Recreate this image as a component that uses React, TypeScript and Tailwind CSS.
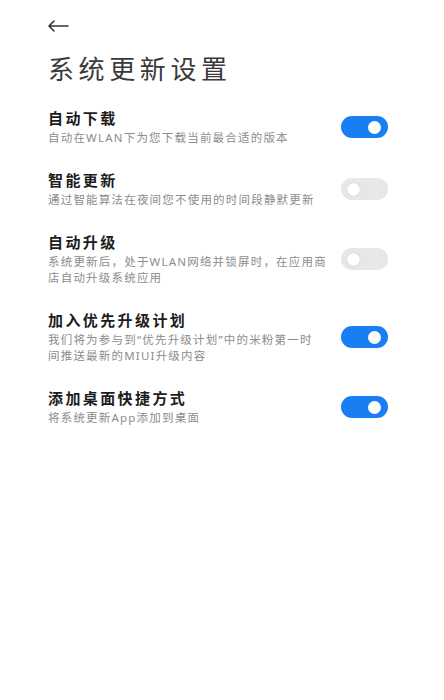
import React from 'react';

type Setting = {
  title: string;
  lines: string[];
  on: boolean;
};

const settings: Setting[] = [
  { title: '自动下载', lines: ['自动在WLAN下为您下载当前最合适的版本'], on: true },
  { title: '智能更新', lines: ['通过智能算法在夜间您不使用的时间段静默更新'], on: false },
  {
    title: '自动升级',
    lines: ['系统更新后，处于WLAN网络并锁屏时，在应用商', '店自动升级系统应用'],
    on: false,
  },
  {
    title: '加入优先升级计划',
    lines: ['我们将为参与到“优先升级计划”中的米粉第一时', '间推送最新的MIUI升级内容'],
    on: true,
  },
  { title: '添加桌面快捷方式', lines: ['将系统更新App添加到桌面'], on: true },
];

const Toggle = ({ on }: { on: boolean }) => (
  <div
    className={
      on
        ? 'w-[47px] h-[22px] shrink-0 rounded-full bg-[#1a7ef3] flex items-center justify-end pr-[7px]'
        : 'w-[47px] h-[22px] shrink-0 rounded-full bg-[#e7e7e7] flex items-center justify-start pl-[6px]'
    }
  >
    <div
      className={
        on
          ? 'w-[13px] h-[13px] rounded-full bg-white'
          : 'w-[13px] h-[13px] rounded-full bg-white shadow-[0_0_1px_rgba(0,0,0,0.25)]'
      }
    />
  </div>
);

export default function App() {
  return (
    <div
      className="min-h-[700px] w-full bg-white pl-12 pr-[56px] pt-5"
      style={{ fontFamily: '"Noto Sans", "Noto Sans CJK SC", sans-serif' }}
    >
      <svg width="21" height="12" viewBox="0 0 21 12" fill="none" className="block">
        <path d="M1 6H20M1 6L6 1M1 6L6 11" stroke="#333" strokeWidth="1.6" strokeLinecap="round" strokeLinejoin="round" />
      </svg>

      <h1 className="mt-5 text-[26px] leading-[34px] tracking-[4.6px] font-normal text-[#3a3a3a]">系统更新设置</h1>

      <div className="mt-[10px] flex flex-col">
        {settings.map((s) => (
          <div key={s.title} className="flex items-center justify-between gap-[10px] py-[12px]">
            <div className="flex flex-col gap-[2px]">
              <div className="text-[15px] leading-[20px] tracking-[2.4px] font-bold text-[#1c1c1c]">{s.title}</div>
              <div className="text-[11.5px] leading-[16px] tracking-[1.2px] text-[#8c8c8c]">
                {s.lines.map((l) => (
                  <div key={l} className="whitespace-nowrap">{l}</div>
                ))}
              </div>
            </div>
            <Toggle on={s.on} />
          </div>
        ))}
      </div>
    </div>
  );
}
